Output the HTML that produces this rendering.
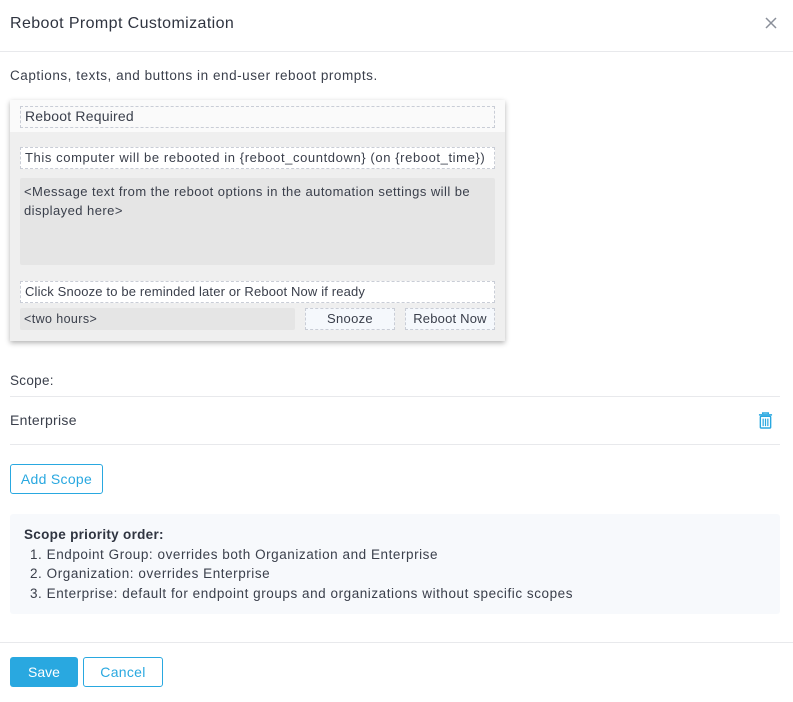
<!DOCTYPE html>
<html><head><meta charset="utf-8"><style>
*{box-sizing:border-box;margin:0;padding:0}
body{width:793px;height:702px;background:#fff;font-family:"Liberation Sans",sans-serif;color:#3a3f4b;position:relative;overflow:hidden}
.a{position:absolute}
.f{position:absolute;border:1px dashed #c9cdd6;font-size:13px;line-height:19px;padding-left:5px;color:#3a3f4b;white-space:nowrap}
.btn{position:absolute;border-radius:3px;font-size:14px;text-align:center}
</style></head><body>
<div class="a" style="left:10px;top:15px;font-size:16px;color:#2f3440;letter-spacing:0.4px">Reboot Prompt Customization</div>
<svg class="a" style="left:765px;top:17px" width="12" height="12" viewBox="0 0 12 12"><path d="M1 1L11 11M11 1L1 11" stroke="#8a8f9a" stroke-width="1.5"/></svg>
<div class="a" style="left:0;top:51px;width:793px;height:1px;background:#e8e9ec"></div>
<div class="a" style="left:10px;top:68px;font-size:13.5px;letter-spacing:0.55px">Captions, texts, and buttons in end-user reboot prompts.</div>

<div class="a" style="left:10px;top:100px;width:495px;height:241px;background:#efefef;box-shadow:0 2px 5px rgba(0,0,0,0.3)">
 <div class="a" style="left:0;top:0;width:495px;height:32px;background:#fafafa"></div>
</div>
<div class="f" style="left:20px;top:106px;width:475px;height:22px;font-size:14px;padding-left:4px;letter-spacing:0.2px">Reboot Required</div>
<div class="f" style="left:20px;top:147px;width:475px;height:22px;background:#fff;padding-left:4px;letter-spacing:0.6px">This computer will be rebooted in {reboot_countdown} (on {reboot_time})</div>
<div class="a" style="left:20px;top:178px;width:475px;height:87px;background:#e5e5e5;border-radius:2px;font-size:13px;line-height:19px;padding:4px 4px;letter-spacing:0.45px">&lt;Message text from the reboot options in the automation settings will be displayed here&gt;</div>
<div class="f" style="left:20px;top:281px;width:475px;height:22px;background:#fff;padding-left:4px;letter-spacing:0.15px">Click Snooze to be reminded later or Reboot Now if ready</div>
<div class="a" style="left:20px;top:308px;width:275px;height:22px;background:#e5e5e5;border-radius:2px;font-size:12.5px;line-height:22px;padding-left:4px;letter-spacing:0.4px">&lt;two hours&gt;</div>
<div class="f" style="left:305px;top:308px;width:90px;height:22px;background:#f5f8fc;text-align:center;padding:0;letter-spacing:0.3px">Snooze</div>
<div class="f" style="left:405px;top:308px;width:90px;height:22px;background:#f5f8fc;text-align:center;padding:0;letter-spacing:0.2px">Reboot Now</div>

<div class="a" style="left:10px;top:373px;font-size:13.5px;letter-spacing:0.3px">Scope:</div>
<div class="a" style="left:10px;top:396px;width:770px;height:1px;background:#e8e9ec"></div>
<div class="a" style="left:10px;top:412px;font-size:14px;letter-spacing:0.3px">Enterprise</div>
<svg class="a" style="left:758px;top:412px" width="15" height="17" viewBox="0 0 16 18"><path d="M5 2V1h6v1M1 3h14" stroke="#29a8e0" stroke-width="1.5" fill="none"/><rect x="2.5" y="4.5" width="11" height="12.5" rx="1" fill="none" stroke="#29a8e0" stroke-width="1.5"/><path d="M5.5 7v8M8 7v8M10.5 7v8" stroke="#29a8e0" stroke-width="1.3"/></svg>
<div class="a" style="left:10px;top:444px;width:770px;height:1px;background:#e8e9ec"></div>
<div class="btn" style="left:10px;top:464px;width:93px;height:30px;border:1px solid #29a8e0;color:#29a8e0;line-height:28px;letter-spacing:0.3px">Add Scope</div>

<div class="a" style="left:10px;top:514px;width:770px;height:100px;background:#f7f9fc;border-radius:3px;font-size:13.5px;line-height:19.5px;padding:11px 14px;letter-spacing:0.55px">
<div style="font-weight:bold;color:#2f3440;letter-spacing:0.3px">Scope priority order:</div>
<div style="padding-left:6px">1. Endpoint Group: overrides both Organization and Enterprise</div>
<div style="padding-left:6px">2. Organization: overrides Enterprise</div>
<div style="padding-left:6px">3. Enterprise: default for endpoint groups and organizations without specific scopes</div>
</div>
<div class="a" style="left:0;top:642px;width:793px;height:1px;background:#e8e9ec"></div>
<div class="btn" style="left:10px;top:657px;width:68px;height:30px;background:#29a8e0;color:#fff;line-height:30px">Save</div>
<div class="btn" style="left:83px;top:657px;width:80px;height:30px;border:1px solid #29a8e0;color:#29a8e0;line-height:28px;letter-spacing:0.3px">Cancel</div>
</body></html>
